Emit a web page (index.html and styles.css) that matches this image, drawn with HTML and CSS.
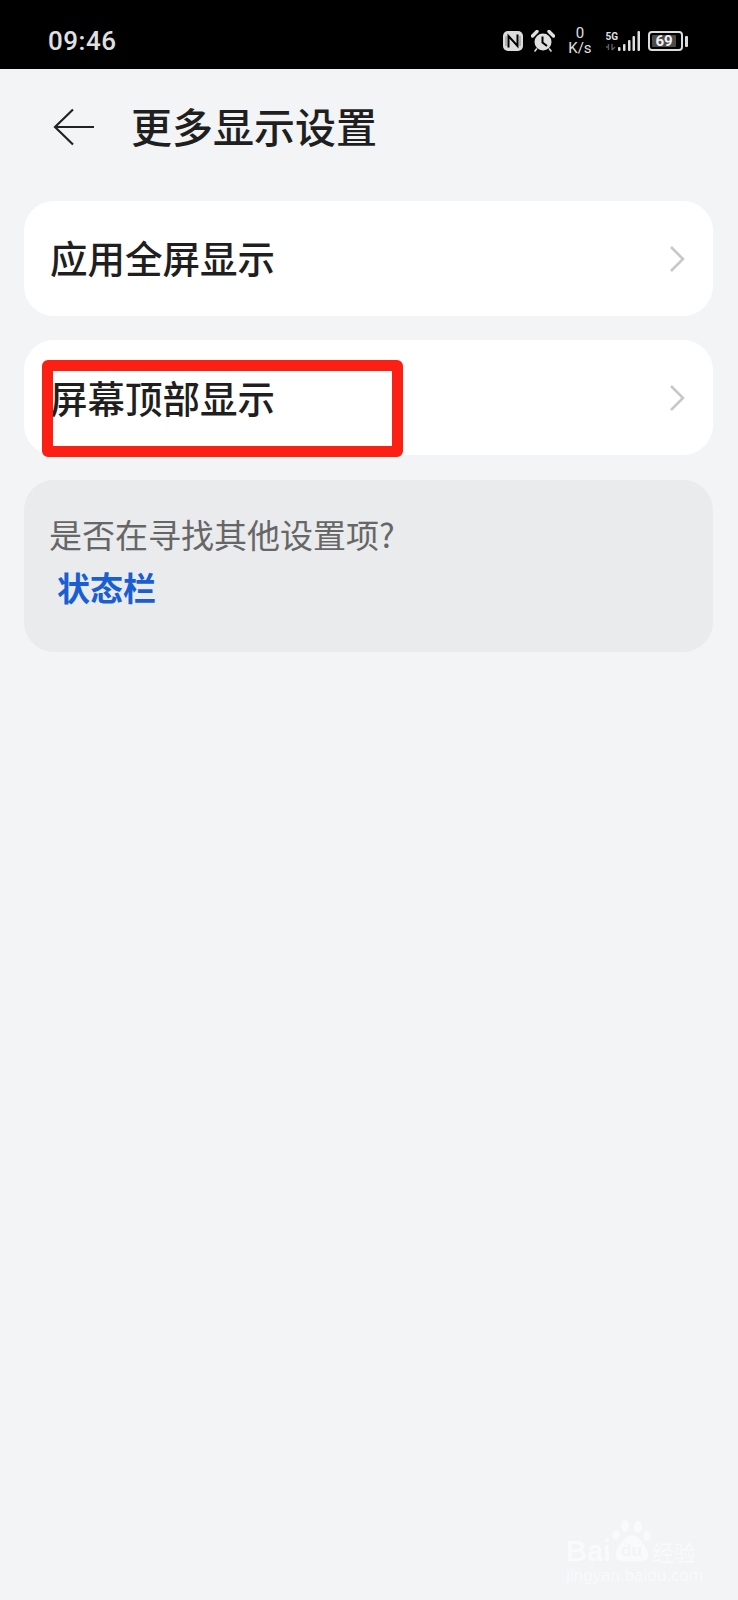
FILE: index.html
```html
<!DOCTYPE html>
<html lang="zh-CN">
<head>
  <meta charset="UTF-8">
  <title>更多显示设置</title>
  <link rel="stylesheet" href="styles.css">
</head>
<body>
  <div class="status-bar">
    <span class="clock">09:46</span>
    <div class="status-icons">
      <svg class="icon-nfc" width="20" height="20" viewBox="0 0 20 20">
        <rect x="0" y="0" width="20" height="20" rx="5" fill="#dcdcdc"/>
        <path d="M5.500 16.500V5L14.500 15V3.500" fill="none" stroke="#000" stroke-width="2"/>
        <path d="M3 5V15M17 5V15" stroke="#000" stroke-width="0.800" opacity="0.500"/>
      </svg>
      <svg class="icon-alarm" width="24" height="22" viewBox="0 0 24 22">
        <circle cx="12" cy="12" r="8.500" fill="#e0e0e0"/>
        <path d="M11.500 6.500V12.500L16 16" fill="none" stroke="#000" stroke-width="2"/>
        <path d="M1.500 6L6 1.500M22.500 6L18 1.500" stroke="#e0e0e0" stroke-width="3.400" stroke-linecap="round"/>
        <path d="M5.500 19L4 21M18.500 19L20 21" stroke="#e0e0e0" stroke-width="1.600" stroke-linecap="round"/>
      </svg>
      <div class="net-speed">
        <span class="net-num">0</span>
        <span class="net-unit">K/s</span>
      </div>
      <div class="signal">
        <div class="signal-labels">
          <span class="five-g">5G</span>
          <svg width="11" height="8" viewBox="0 0 11 8">
            <path d="M1 4H4M3.500 1V7M7 1V7M7 7L10 4" fill="none" stroke="#5c5c5c" stroke-width="1.400"/>
          </svg>
        </div>
        <svg width="22" height="20" viewBox="0 0 22 20">
          <rect x="0" y="16" width="2.500" height="4" rx="1" fill="#e0e0e0"/>
          <rect x="5" y="13" width="2.500" height="7" rx="1" fill="#e0e0e0"/>
          <rect x="10" y="9" width="2.500" height="11" rx="1" fill="#e0e0e0"/>
          <rect x="14.500" y="5" width="2.500" height="15" rx="1" fill="#e0e0e0"/>
          <rect x="19.500" y="0" width="2.500" height="20" rx="1" fill="#e0e0e0"/>
        </svg>
      </div>
      <div class="battery">
        <div class="battery-body"><span class="battery-level">69</span></div>
        <div class="battery-tip"></div>
      </div>
    </div>
  </div>

  <div class="title-bar">
    <svg class="back-icon" width="42" height="38" viewBox="0 0 42 38">
      <path d="M20 1.500L2 19L20 36.500M2 19H41" fill="none" stroke="#222" stroke-width="2.200"/>
    </svg>
    <h1 class="page-title">更多显示设置</h1>
  </div>

  <div class="list">
    <div class="card">
      <span class="card-label">应用全屏显示</span>
      <svg class="chevron" width="16" height="28" viewBox="0 0 16 28">
        <path d="M2 2L14 14L2 26" fill="none" stroke="#c8c8c8" stroke-width="2.600"/>
      </svg>
    </div>
    <div class="card card-marked">
      <span class="card-label">屏幕顶部显示</span>
      <svg class="chevron" width="16" height="28" viewBox="0 0 16 28">
        <path d="M2 2L14 14L2 26" fill="none" stroke="#c8c8c8" stroke-width="2.600"/>
      </svg>
      <div class="red-mark"></div>
    </div>
    <div class="hint-card">
      <div class="hint-text">是否在寻找其他设置项?</div>
      <a class="hint-link">状态栏</a>
    </div>
  </div>

  <div class="watermark">
    <div class="wm-logo">
      <span class="wm-bai">Bai</span>
      <svg class="wm-paw" width="40" height="44" viewBox="0 0 40 44">
        <ellipse cx="4" cy="15" rx="3.500" ry="4.500" fill="#f9fafb"/>
        <ellipse cx="13" cy="6" rx="4" ry="6" fill="#f9fafb"/>
        <ellipse cx="26" cy="7" rx="4" ry="6" fill="#f9fafb"/>
        <ellipse cx="35" cy="16" rx="3.500" ry="5" fill="#f9fafb"/>
        <path d="M20 15C27 15 38 30 36 37C34 43 26 41 20 41C14 41 6 43 4 37C2 30 13 15 20 15Z" fill="#f9fafb"/>
      </svg>
      <span class="wm-du">du</span>
      <span class="wm-cn">经验</span>
    </div>
    <div class="wm-url">jingyan.baidu.com</div>
  </div>
</body>
</html>
```

FILE: styles.css
```css
html, body {
  margin: 0;
  padding: 0;
}

body {
  position: relative;
  height: 1600px;
  overflow: hidden;
  background: #f2f4f6;
  font-family: "Noto Sans CJK SC", "Noto Sans", sans-serif;
  color: #1f1f1f;
}

.status-bar {
  display: flex;
  justify-content: space-between;
  align-items: center;
  height: 69px;
  padding: 13px 50px 0 48px;
  box-sizing: border-box;
  background: #000;
  color: #e0e0e0;
}

.clock {
  font-family: Roboto, sans-serif;
  font-size: 26px;
  font-weight: 500;
  letter-spacing: 0.5px;
}

.status-icons {
  display: flex;
  align-items: center;
}

.icon-nfc {
  margin-right: 8px;
}

.icon-alarm {
  margin-right: 12px;
}

.net-speed {
  display: flex;
  flex-direction: column;
  align-items: center;
  width: 25px;
  margin-right: 13px;
  font-family: Roboto, sans-serif;
  font-size: 15px;
  line-height: 15px;
}

.signal {
  display: flex;
  align-items: flex-end;
  margin-right: 8px;
}

.signal-labels {
  display: flex;
  flex-direction: column;
  align-items: flex-start;
}

.five-g {
  font-family: Roboto, sans-serif;
  font-size: 10px;
  font-weight: 700;
  line-height: 12px;
}

.battery {
  display: flex;
  align-items: center;
  gap: 2px;
}

.battery-body {
  width: 35px;
  height: 20px;
  padding: 2px;
  box-sizing: border-box;
  border: 2px solid #dcdcdc;
  border-radius: 4px;
}

.battery-level {
  display: block;
  width: 24px;
  height: 12px;
  border-radius: 1px;
  background: #4a4a4a;
  color: #f2f2f2;
  font-family: Roboto, sans-serif;
  font-size: 15px;
  font-weight: 700;
  line-height: 12px;
  text-align: center;
}

.battery-tip {
  width: 3px;
  height: 11px;
  border-radius: 1px;
  background: #dcdcdc;
}

.title-bar {
  display: flex;
  align-items: center;
  height: 116px;
  padding-left: 53px;
}

.back-icon {
  margin-right: 36px;
}

.page-title {
  margin: 0 0 4px;
  font-size: 41px;
  font-weight: 500;
  line-height: 56px;
}

.list {
  display: flex;
  flex-direction: column;
  gap: 24px;
  margin: 16px 25px 0 24px;
}

.card {
  display: flex;
  justify-content: space-between;
  align-items: center;
  height: 115px;
  padding: 0 28px 0 26px;
  border-radius: 30px;
  background: #fff;
}

.card-marked {
  position: relative;
}

.card-label {
  margin-bottom: 4px;
  font-size: 37.5px;
  font-weight: 500;
  line-height: 50px;
}

.card-marked .card-label {
  margin-bottom: 2px;
}

.chevron {
  flex-shrink: 0;
}

/* annotation drawn over the row */
.red-mark {
  position: absolute;
  left: 18px;
  top: 20px;
  width: 361px;
  height: 97px;
  box-sizing: border-box;
  border: 11px solid #fb1f14;
  border-radius: 6px;
}

.hint-card {
  display: flex;
  flex-direction: column;
  align-items: flex-start;
  height: 172px;
  margin-top: 1px;
  padding: 26px 25px 0;
  box-sizing: border-box;
  border-radius: 30px;
  background: #e9ebed;
}

.hint-text {
  font-size: 33px;
  line-height: 56px;
  color: #666;
}

.hint-link {
  margin-left: 8px;
  font-size: 33px;
  font-weight: 700;
  line-height: 50px;
  color: #1a5fd2;
}

.watermark {
  position: absolute;
  left: 566px;
  top: 1520px;
  width: 150px;
  color: #f9fafb;
}

.wm-logo {
  position: relative;
  height: 44px;
}

.wm-bai {
  position: absolute;
  left: 0;
  top: 17px;
  font-family: "Liberation Sans", sans-serif;
  font-size: 29px;
  font-weight: 700;
  line-height: 29px;
}

.wm-paw {
  position: absolute;
  left: 46px;
  top: 0;
}

.wm-du {
  position: absolute;
  left: 55px;
  top: 22px;
  font-family: "Liberation Sans", sans-serif;
  font-size: 17px;
  font-weight: 700;
  line-height: 17px;
  color: #f2f4f6;
}

.wm-cn {
  position: absolute;
  left: 86px;
  top: 18px;
  font-size: 22px;
  line-height: 26px;
  white-space: nowrap;
}

.wm-url {
  margin-top: 2px;
  font-family: "Liberation Sans", sans-serif;
  font-size: 17px;
  line-height: 20px;
  white-space: nowrap;
}
```
